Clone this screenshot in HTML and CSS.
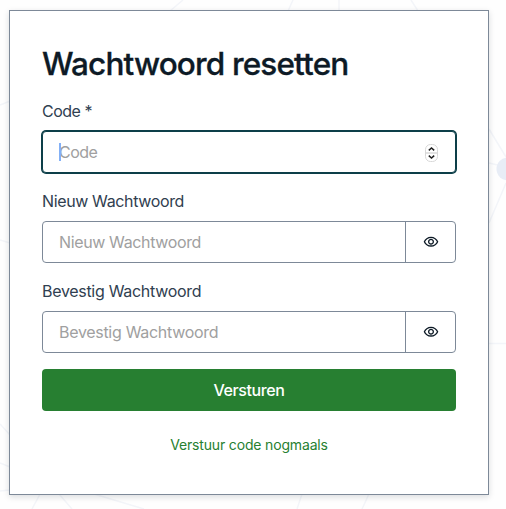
FILE: index.html
```html
<!DOCTYPE html>
<html lang="nl">
<head>
<meta charset="utf-8">
<title>Wachtwoord resetten</title>
<link rel="stylesheet" href="styles.css">
</head>
<body>
<svg class="network" viewBox="0 0 506 509" aria-hidden="true">
  <path d="M183 0L170 11M0 105L10 101M0 240L10 243M293 0L288 11M339 0V11M411 0L418 11M489 129L506 157M489 163L506 167M489 223L506 183M489 343.500H506M0 424L10 435M0 463L10 467M0 491L10 490M40 494L32 509M59 494L72 509M94 494L144 509M302 494L297 509M369 494L362 509"/>
  <circle cx="508" cy="169" r="11.500"/>
</svg>
<main class="card">
  <h1 class="title">Wachtwoord resetten</h1>
  <form class="form">
    <div class="field">
      <label class="label label-code" for="code">Code *</label>
      <div class="group group-focus">
        <input class="input input-code" id="code" type="text" placeholder="Code">
        <span class="caret"></span>
        <svg class="spinner" viewBox="0 0 13 18" aria-hidden="true">
          <rect class="spinner-box" x=".5" y=".5" width="12" height="17" rx="5"/>
          <path class="spinner-line" d="M1 9H12"/>
          <path class="spinner-arrow" d="M3.800 6.400L6.500 4L9.200 6.400M3.800 11.600L6.500 14L9.200 11.600"/>
        </svg>
      </div>
    </div>
    <div class="field">
      <label class="label label-new" for="new">Nieuw Wachtwoord</label>
      <div class="group">
        <input class="input input-new" id="new" type="password" placeholder="Nieuw Wachtwoord">
        <button class="reveal" type="button"><svg class="eye" viewBox="0 0 24 24" aria-hidden="true"><path d="M12 6c3.790 0 7.170 2.130 8.820 5.500C19.170 14.870 15.790 17 12 17s-7.170-2.130-8.820-5.500C4.830 8.130 8.210 6 12 6m0-2C7 4 2.730 7.110 1 11.500 2.730 15.890 7 19 12 19s9.270-3.110 11-7.500C21.270 7.110 17 4 12 4zm0 5c1.380 0 2.500 1.120 2.500 2.500S13.380 14 12 14s-2.500-1.120-2.500-2.500S10.620 9 12 9m0-2c-2.480 0-4.500 2.020-4.500 4.500S9.520 16 12 16s4.500-2.020 4.500-4.500S14.480 7 12 7z"/></svg></button>
      </div>
    </div>
    <div class="field">
      <label class="label label-confirm" for="confirm">Bevestig Wachtwoord</label>
      <div class="group">
        <input class="input input-confirm" id="confirm" type="password" placeholder="Bevestig Wachtwoord">
        <button class="reveal" type="button"><svg class="eye" viewBox="0 0 24 24" aria-hidden="true"><path d="M12 6c3.790 0 7.170 2.130 8.820 5.500C19.170 14.870 15.790 17 12 17s-7.170-2.130-8.820-5.500C4.830 8.130 8.210 6 12 6m0-2C7 4 2.730 7.110 1 11.500 2.730 15.890 7 19 12 19s9.270-3.110 11-7.500C21.270 7.110 17 4 12 4zm0 5c1.380 0 2.500 1.120 2.500 2.500S13.380 14 12 14s-2.500-1.120-2.500-2.500S10.620 9 12 9m0-2c-2.480 0-4.500 2.020-4.500 4.500S9.520 16 12 16s4.500-2.020 4.500-4.500S14.480 7 12 7z"/></svg></button>
      </div>
    </div>
    <button class="submit" type="button">Versturen</button>
    <button class="resend" type="button">Verstuur code nogmaals</button>
  </form>
</main>
</body>
</html>
```
FILE: styles.css
```css
* { box-sizing: border-box; }
body {
  margin: 0;
  padding: 10px 0 0 9px;
  height: 509px;
  overflow: hidden;
  background: #fefefe;
  color: #304050;
  font: 400 16px/24px Inter, "Liberation Sans", sans-serif;
}
.network { position: absolute; top: 0; left: 0; width: 506px; height: 509px; fill: none; stroke: #f3f5f9; stroke-width: 1.500; }
.network circle { fill: #e8edf6; stroke: none; }
.card {
  position: relative;
  width: 480px;
  height: 485px;
  padding: 32px;
  border: 1px solid #7d8998;
  background: #fff;
  box-shadow: 0 2px 6px rgba(13, 26, 38, .15);
}
.title { margin: 0 0 16px; padding-top: 1px; height: 40px; color: #0d1a26; font-size: 31.5px; line-height: 40px; font-weight: 500; letter-spacing: -.85px; -webkit-text-stroke: .3px currentColor; white-space: nowrap; }
.form { display: flex; flex-direction: column; gap: 16px; }
.field { display: flex; flex-direction: column; gap: 8px; }
.label { letter-spacing: -.3px; }
.label-code { letter-spacing: -.5px; }
.label-new { letter-spacing: -.37px; }
.group { position: relative; display: flex; height: 42px; border: 1px solid #7d8998; border-radius: 4px; background: #fff; }
.group-focus { border-color: #0d3f49; box-shadow: 0 0 0 1px #0d3f49; }
.input { flex: 1; min-width: 0; padding: 0 16px; border: 0; outline: 0; background: transparent; font: inherit; letter-spacing: -.3px; }
.input-code { letter-spacing: -.5px; }
.input-new { letter-spacing: -.37px; }
.input::placeholder { color: #a0a0a0; opacity: 1; }
.caret { position: absolute; left: 16px; top: 11px; width: 2px; height: 18px; background: #83b0f6; }
.spinner { position: absolute; right: 17px; top: 12px; width: 13px; height: 18px; fill: none; }
.spinner-box { fill: #fff; stroke: #d8d8d8; }
.spinner-line { stroke: #d8d8d8; stroke-width: 1.500; }
.spinner-arrow { stroke: #222; stroke-width: 1.500; }
.reveal { display: flex; align-items: center; justify-content: center; width: 50px; padding: 0; border: 0; border-left: 1px solid #7d8998; background: transparent; color: #0d1a26; }
.eye { width: 16px; height: 16px; fill: currentColor; }
.submit { height: 42px; padding: 0; border: 0; border-radius: 4px; background: #277f31; color: #fff; font: 500 16px/24px Inter, sans-serif; letter-spacing: -.4px; }
.resend { height: 35px; padding: 0; border: 0; background: transparent; color: #277f31; font: 400 14px/21px Inter, sans-serif; letter-spacing: -.16px; }
```
